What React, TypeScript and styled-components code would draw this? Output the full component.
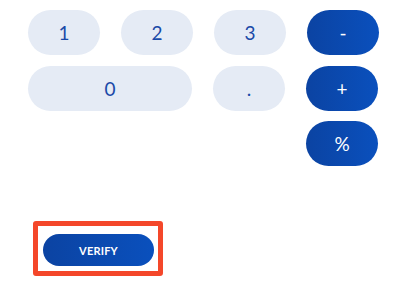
import React from "react";
import styled, { createGlobalStyle } from "styled-components";

const Global = createGlobalStyle`
  html, body { margin: 0; padding: 0; background: #ffffff; }
  body { font-family: Lato, "Open Sans", sans-serif; }
`;

const Page = styled.div`
  width: 398px;
  height: 290px;
  box-sizing: border-box;
  padding: 10px 0 0 28px;
  display: flex;
  flex-direction: column;
`;

const Pad = styled.div`
  display: grid;
  grid-template-columns: repeat(4, 72px);
  grid-auto-rows: 45px;
  column-gap: 21px;
  row-gap: 10.5px;
`;

const Key = styled.button<{ $dark?: boolean; $span?: number; $nudge?: boolean }>`
  grid-column: ${(p) => (p.$span ? `span ${p.$span}` : "auto")};
  margin: ${(p) => (p.$nudge ? (p.$span ? "0 1px 0 0" : "0 1px 0 -1px") : "0")};
  border: none;
  border-radius: 23px;
  font-family: Lato, "Open Sans", sans-serif;
  font-size: 19px;
  font-weight: 400;
  padding: 0;
  display: flex;
  align-items: center;
  justify-content: center;
  cursor: pointer;
  color: ${(p) => (p.$dark ? "#ffffff" : "#1a4aa8")};
  background: ${(p) =>
    p.$dark ? "linear-gradient(90deg, #0b43a2 0%, #0a50bd 100%)" : "#e5ebf5"};
`;

const Spacer = styled.div<{ $col: number }>`
  grid-column: ${(p) => p.$col} / span 3;
`;

const Frame = styled.div`
  margin-top: 55px;
  margin-left: 5px;
  width: 130px;
  height: 55px;
  box-sizing: border-box;
  border: 5px solid #f4472a;
  border-radius: 3px;
  padding: 8px 4px 5px 5px;
  display: flex;
`;

const Verify = styled.button`
  flex: 1;
  height: 32px;
  border: none;
  border-radius: 16px;
  background: linear-gradient(90deg, #0b43a2 0%, #0a50bd 100%);
  color: #ffffff;
  font-family: Lato, "Open Sans", sans-serif;
  font-size: 11px;
  font-weight: 700;
  letter-spacing: 0.2px;
  padding: 0;
  cursor: pointer;
`;

export default function App() {
  return (
    <>
      <Global />
      <Page>
        <Pad>
          <Key>1</Key>
          <Key>2</Key>
          <Key>3</Key>
          <Key $dark>-</Key>
          <Key $span={2} $nudge>0</Key>
          <Key $nudge>.</Key>
          <Key $dark $nudge>+</Key>
          <Spacer $col={1} />
          <Key $dark $nudge>%</Key>
        </Pad>
        <Frame>
          <Verify>VERIFY</Verify>
        </Frame>
      </Page>
    </>
  );
}
